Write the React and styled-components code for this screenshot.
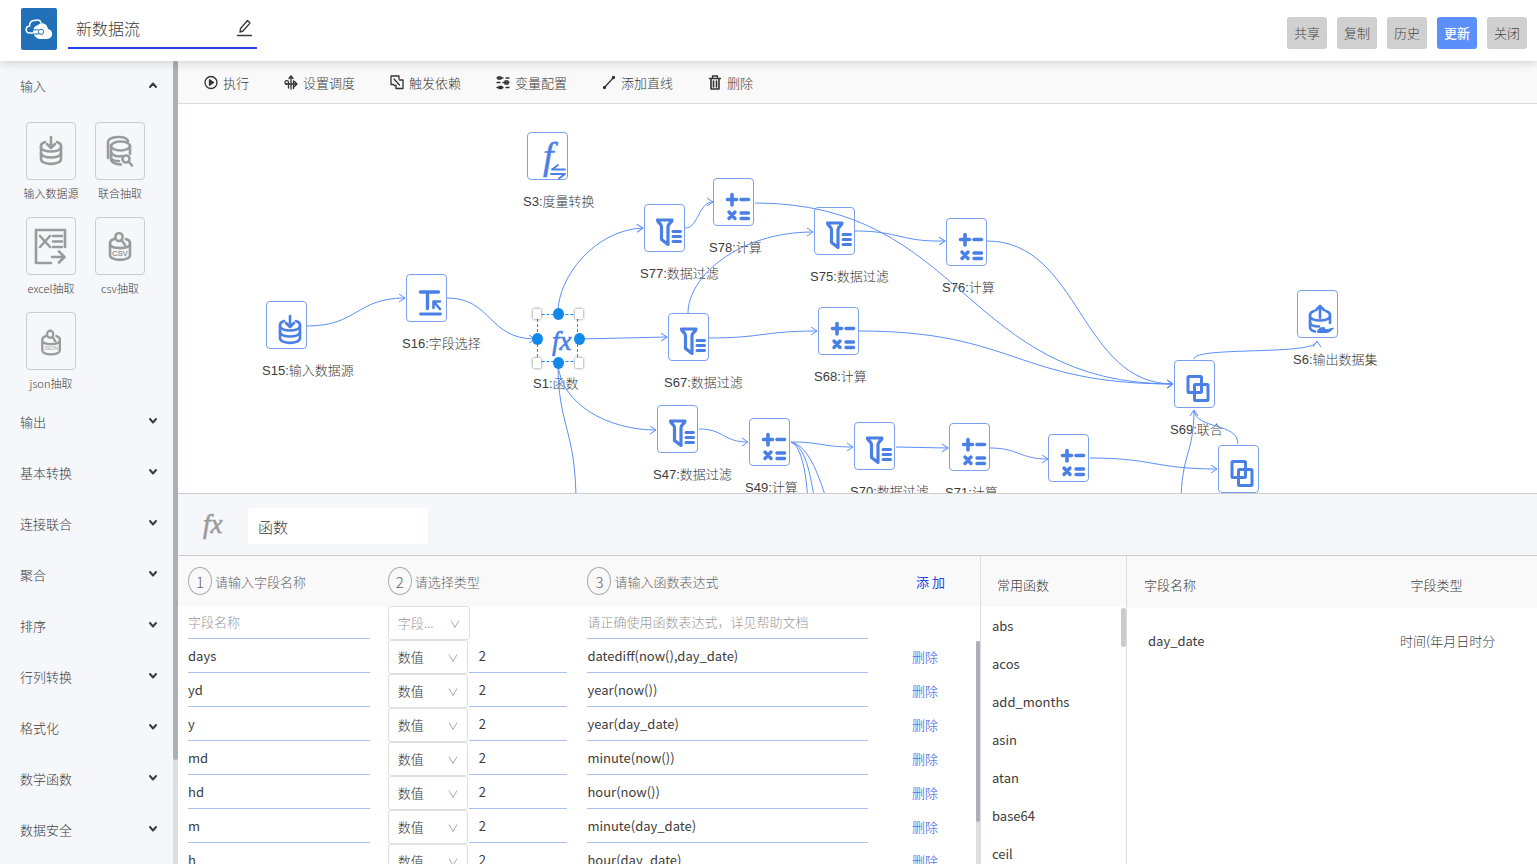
import React, { useState } from 'react';
import styled, { createGlobalStyle } from 'styled-components';

const BLUE = '#4a7fe5';
const GRAY = '#9b9b9b';

// 左侧菜单
const INPUT_ITEMS = [
  { id: 'source', icon: 'dbIn', label: '输入数据源' },
  { id: 'union', icon: 'dbSearch', label: '联合抽取' },
  { id: 'excel', icon: 'excel', label: 'excel抽取' },
  { id: 'csv', icon: 'csv', label: 'csv抽取' },
  { id: 'json', icon: 'json', label: 'json抽取' },
];

const GROUPS = ['输出', '基本转换', '连接联合', '聚合', '排序', '行列转换', '格式化', '数学函数', '数据安全'];

const TOOLS = [
  { icon: 'run', label: '执行' },
  { icon: 'schedule', label: '设置调度' },
  { icon: 'depend', label: '触发依赖' },
  { icon: 'config', label: '变量配置' },
  { icon: 'line', label: '添加直线' },
  { icon: 'trash', label: '删除' },
];

const ACTIONS = ['共享', '复制', '历史', '更新', '关闭'];

// 画布节点
const NODES = [
  { id: 'S3', x: 349, y: 28, icon: 'measure', label: '度量转换' },
  { id: 'S15', x: 88, y: 197, icon: 'dbIn', label: '输入数据源' },
  { id: 'S16', x: 228, y: 170, icon: 'textSelect', label: '字段选择' },
  { id: 'S77', x: 466, y: 100, icon: 'filter', label: '数据过滤' },
  { id: 'S78', x: 535, y: 74, icon: 'calc', label: '计算' },
  { id: 'S75', x: 636, y: 103, icon: 'filter', label: '数据过滤' },
  { id: 'S76', x: 768, y: 114, icon: 'calc', label: '计算' },
  { id: 'S1', x: 359, y: 210, icon: 'fx', label: '函数', active: true },
  { id: 'S67', x: 490, y: 209, icon: 'filter', label: '数据过滤' },
  { id: 'S68', x: 640, y: 203, icon: 'calc', label: '计算' },
  { id: 'S47', x: 479, y: 301, icon: 'filter', label: '数据过滤' },
  { id: 'S49', x: 571, y: 314, icon: 'calc', label: '计算' },
  { id: 'S70', x: 676, y: 318, icon: 'filter', label: '数据过滤' },
  { id: 'S71', x: 771, y: 319, icon: 'calc', label: '计算' },
  { id: 'S72', x: 870, y: 330, icon: 'calc', label: '计算' },
  { id: 'S69', x: 996, y: 256, icon: 'union', label: '联合' },
  { id: 'S73', x: 1040, y: 341, icon: 'union', label: '联合' },
  { id: 'S6', x: 1119, y: 186, icon: 'dbOut', label: '输出数据集' },
];

const EDGES = [
  'M129 222C180 222 178 194 227 194',
  'M269 194C314 194 310 235 357 235',
  'M380 208C380 174 416 126 465 124',
  'M507 124C521 124 520 98 535 98',
  'M577 99C786 99 786 280 995 280',
  'M510 209C510 173 560 128 635 128',
  'M677 127C722 127 722 138 767 137',
  'M809 137C902 137 902 280 995 280',
  'M401 235L489 233',
  'M531 234C585 234 585 227 639 227',
  'M681 227C838 227 838 280 995 280',
  'M380 259C382 300 430 326 478 326',
  'M521 325C546 325 545 338 570 338',
  'M613 338C644 338 644 343 675 343',
  'M718 343L770 344',
  'M812 344C841 344 841 355 870 355',
  'M912 354C976 354 976 365 1039 365',
  'M1016 255C1016 242 1139 252 1139 237',
  'M1003 400C1003 350 1016 350 1016 306',
];

const OPEN_EDGES = [
  'M380 259C380 324 398 324 398 400',
  'M613 338C626 344 629 380 630 400',
  'M613 338C629 342 634 380 637 400',
  'M613 338C632 342 642 376 650 400',
  'M1060 340C1060 318 1018 326 1016 306',
];

const ROWS = [
  { name: 'days', expr: 'datediff(now(),day_date)' },
  { name: 'yd', expr: 'year(now())' },
  { name: 'y', expr: 'year(day_date)' },
  { name: 'md', expr: 'minute(now())' },
  { name: 'hd', expr: 'hour(now())' },
  { name: 'm', expr: 'minute(day_date)' },
  { name: 'h', expr: 'hour(day_date)' },
];

const FUNCS = ['abs', 'acos', 'add_months', 'asin', 'atan', 'base64', 'ceil'];

const SHAPES = {
  dbIn: (
    <>
      <path d="M12 1V11M8 8L12 12L16 8" />
      <path d="M6 6C3 7 2 8.500 2 10V23C2 29.500 22 29.500 22 23V10C22 8.500 21 7 18 6" />
      <path d="M2 11C2 17 22 17 22 11M2 17C2 23 22 23 22 17" />
    </>
  ),
  dbOut: (
    <>
      <path d="M11 14V2M7 6L11 2L15 6" />
      <path d="M5 7C2 8 1 9.500 1 11V23C1 26 3 27 6 27.500M21 19V11C21 9.500 20 8 17 7" />
      <path d="M1 12C1 18 21 18 21 12M1 18C1 21 5 22.500 10 22.500" />
      <path d="M9 26C12 23 14 23 16 24L14 25.500H19L24.500 24C22 27 20 28.500 17 28.500H9Z" fill="currentColor" strokeWidth="1" />
    </>
  ),
  dbSearch: (
    <>
      <path d="M0 22V6C1 0 18 -1 20 5" />
      <ellipse cx="12.500" cy="10" rx="9.500" ry="4.500" />
      <path d="M3 10V23C3 26 7 28.500 13 28.500M22 10V18" />
      <path d="M3 16C4 19.500 9 21 14 20M3 22C4 24 7 25 11 25" />
      <circle cx="18" cy="23" r="3.500" />
      <path d="M20.500 25.500L24 29.500" />
    </>
  ),
  excel: (
    <>
      <path d="M26 16V-1H-3V32H12" />
      <path d="M1 5L11 16M11 5L1 16" />
      <path d="M14 5H23M14 10.500H23M14 16H23" />
      <path d="M13 26H25M20 20.500L25.500 26L20 31.500" />
    </>
  ),
  csv: (
    <>
      <ellipse cx="11" cy="6" rx="3.600" ry="4" />
      <path d="M13.500 9L17 14" />
      <path d="M6 8C3 9 2 10.500 2 12V24C2 30.500 22 30.500 22 24V12C22 10.500 21 9 18 8M2 13C3 18.500 21 18.500 22 13" />
      <text x="12" y="25" textAnchor="middle" fontSize="7.500" fontFamily="Liberation Sans, sans-serif" fill="currentColor" strokeWidth="0.300">
        CSV
      </text>
    </>
  ),
  json: (
    <g transform="translate(1.500 3) scale(0.880)">
      <ellipse cx="11" cy="6" rx="3.600" ry="4" />
      <path d="M13.500 9L17 14" />
      <path d="M6 8C3 9 2 10.500 2 12V24C2 30.500 22 30.500 22 24V12C22 10.500 21 9 18 8M2 13C3 18.500 21 18.500 22 13" />
      <text x="12" y="24" textAnchor="middle" fontSize="6" fontFamily="Liberation Sans, sans-serif" fill="currentColor" stroke="none">
        JSON
      </text>
    </g>
  ),
  textSelect: (
    <>
      <path d="M2.500 4H20.500M9.500 4V20.500" strokeWidth="3.400" />
      <path d="M2.500 26H22.500" strokeWidth="2.800" />
      <path d="M15.500 20V13.500H22M16 14L22 21" strokeWidth="2.600" />
    </>
  ),
  fx: (
    <text x="3" y="22" fontSize="27" fontStyle="italic" fontFamily="Liberation Serif, serif" fill="currentColor" strokeWidth="0.600">
      fx
    </text>
  ),
  measure: (
    <>
      <text x="4" y="23" fontSize="38" fontStyle="italic" fontFamily="Liberation Serif, serif" fill="currentColor" strokeWidth="0.500">
        f
      </text>
      <path d="M26 23.500H13L19 19M12 28H26L20 32.500" strokeWidth="1.800" />
    </>
  ),
  filter: (
    <>
      <path d="M1.500 2H16C16.500 4 12 5.500 12 8.500V26.500L5.500 21.500V8.500C5.500 5.500 1 4 1.500 2Z" strokeWidth="3.200" />
      <path d="M17 13.500H24.500M17 18.500H24.500M17 23.500H24.500" strokeWidth="3" />
    </>
  ),
  calc: (
    <>
      <path d="M2.500 7.500H11.500M7 2.500V13M16 7.500H23.500" strokeWidth="3.600" />
      <path d="M4 20L10 26.500M10 20L4 26.500M16 21H23.500M16 26.500H23.500" strokeWidth="3.400" />
    </>
  ),
  union: (
    <>
      <rect x="2" y="2.500" width="13.500" height="16" rx="1" strokeWidth="3" />
      <rect x="8.500" y="10.500" width="13.500" height="16" rx="1" strokeWidth="3" />
    </>
  ),
};

const TOOL_SHAPES = {
  run: (
    <>
      <circle cx="7" cy="7.500" r="6" />
      <path d="M5.500 4.800L9.500 7.500L5.500 10.200Z" fill="currentColor" />
    </>
  ),
  schedule: (
    <>
      <path d="M7 1V14M5 3.500L7 1L9 3.500M2 9H12.500M10.500 6.500L13 9L10.500 11.500" />
      <path d="M4.500 13V7.500C4.500 5 1 5 1 7.500C1 9 2 9.500 3 9M9.500 13.500V6" />
    </>
  ),
  depend: (
    <>
      <path d="M9 4V1H1V9.500H3.500L5 11" />
      <path d="M9.500 5H13V13.500H6V10M4 4L9.500 10" />
    </>
  ),
  config: (
    <>
      <path d="M1 3H7M10 3H13M1 7.500H4M7 7.500H13M1 12.500H7M10 12.500H13" />
      <rect x="2" y="2" width="3" height="2" />
      <rect x="9" y="6" width="3" height="3" />
      <rect x="3" y="11.500" width="3" height="2" />
    </>
  ),
  line: (
    <>
      <path d="M2.500 12.500L11 3" />
      <circle cx="2.500" cy="12.500" r="1" fill="currentColor" />
      <circle cx="11.500" cy="2.500" r="1" fill="currentColor" />
    </>
  ),
  trash: (
    <>
      <path d="M1.500 3.500H12.500M4.500 3V1H9.500V3" />
      <path d="M3 4V14H11V4M5.500 6V12M8.500 6V12" strokeWidth="1.600" />
    </>
  ),
};

const NodeIcon = ({ name }) => (
  <Glyph width="24" height="30" viewBox="0 0 24 30" strokeWidth="2.600">
    {SHAPES[name]}
  </Glyph>
);

const Chevron = ({ up }) => (
  <Glyph width="10" height="10" viewBox="0 0 10 10" strokeWidth="2">
    <path d={up ? 'M2 7L5 3.500L8 7' : 'M2 3L5 6.500L8 3'} />
  </Glyph>
);

const Select = ({ label, value, options, muted }) => (
  <SelectBox $muted={muted}>
    <select aria-label={label} defaultValue={value}>
      {options.map((option) => (
        <option key={option}>{option}</option>
      ))}
    </select>
    <svg width="10" height="10" viewBox="0 0 10 10" fill="none" stroke="#aaa">
      <path d="M1 1.500L5 8.500L9 1.500" />
    </svg>
  </SelectBox>
);

const App = () => {
  const [title, setTitle] = useState('新数据流');
  const [stepName, setStepName] = useState('函数');
  const [opened, setOpened] = useState(true);

  return (
    <>
      <GlobalStyle />
      <Page>
        <Header>
          <Logo width="36" height="42" viewBox="0 0 36 42">
            <rect width="36" height="42" rx="2" fill="#2170b8" />
            <path
              d="M12 25C14 29 16 31 20 31H26C32.500 31 33 22 27 21C26 15.500 20.500 13.500 17 17C15 17.500 13 19 12.500 21Z"
              fill="#fff"
            />
            <path
              d="M12.500 25H9C4 25 4 18.500 8.500 18C8.500 13.500 11.500 12 14 12.500C17 11 19.500 12.500 20 15"
              fill="none"
              stroke="#fff"
              strokeWidth="1.500"
            />
            <path d="M11 21.800H17.500" stroke="#2170b8" />
            <path d="M12 26H18" stroke="#2170b8" />
            <circle cx="20" cy="23.800" r="2.600" fill="#fff" stroke="#2170b8" />
          </Logo>
          <TitleBox>
            <input aria-label="数据流名称" value={title} onChange={(e) => setTitle(e.target.value)} />
            <Glyph width="15" height="18" viewBox="0 0 15 18" strokeWidth="1.400">
              <path d="M3 13L3.500 9.500L10.500 1.500L13 4L6 12Z M0.500 16.500H14.500" />
            </Glyph>
          </TitleBox>
          <Actions>
            {ACTIONS.map((action) => (
              <ActionButton key={action} type="button" $primary={action === '更新'}>
                {action}
              </ActionButton>
            ))}
          </Actions>
        </Header>

        <Body>
          <Sidebar>
            <Menu>
              <GroupButton type="button" aria-expanded={opened} onClick={() => setOpened(!opened)}>
                输入
                <Chevron up={opened} />
              </GroupButton>
              {opened && (
                <Tiles>
                  {INPUT_ITEMS.map((item) => (
                    <Tile key={item.id}>
                      <TileIcon>
                        <NodeIcon name={item.icon} />
                      </TileIcon>
                      <span>{item.label}</span>
                    </Tile>
                  ))}
                </Tiles>
              )}
              {GROUPS.map((group) => (
                <GroupButton key={group} type="button" aria-expanded="false">
                  {group}
                  <Chevron />
                </GroupButton>
              ))}
            </Menu>
            <SideRail>
              <Thumb $size="87%" />
            </SideRail>
          </Sidebar>

          <Work>
            <Toolbar>
              {TOOLS.map((tool) => (
                <ToolButton key={tool.icon} type="button">
                  <Glyph width="14" height="15" viewBox="0 0 14 15" strokeWidth="1.300">
                    {TOOL_SHAPES[tool.icon]}
                  </Glyph>
                  {tool.label}
                </ToolButton>
              ))}
            </Toolbar>

            <Canvas>
              {NODES.map((node) => (
                <Node key={node.id} $x={node.x} $y={node.y}>
                  <NodeBox $active={node.active}>
                    <NodeIcon name={node.icon} />
                  </NodeBox>
                  <NodeLabel>
                    {node.id}:{node.label}
                  </NodeLabel>
                </Node>
              ))}
              <Edges>
                <defs>
                  <marker id="arrow" markerUnits="userSpaceOnUse" markerWidth="10" markerHeight="12" refX="7" refY="5" orient="auto">
                    <path d="M1 1L7 5L1 9" fill="none" stroke="#5b8ff9" />
                  </marker>
                </defs>
                {EDGES.map((d) => (
                  <path key={d} d={d} markerEnd="url(#arrow)" />
                ))}
                {OPEN_EDGES.map((d) => (
                  <path key={d} d={d} />
                ))}
              </Edges>
              <Handle $x={359} $y={210} />
              <Handle $x={401} $y={210} />
              <Handle $x={359} $y={259} />
              <Handle $x={401} $y={259} />
              <Port $x={380} $y={210} />
              <Port $x={359} $y={235} />
              <Port $x={401} $y={235} />
              <Port $x={380} $y={259} />
            </Canvas>

            <Dock>
              <DockHeader>
                <NodeIcon name="fx" />
                <input aria-label="步骤名称" value={stepName} onChange={(e) => setStepName(e.target.value)} />
              </DockHeader>
              <Panels>
                <Editor>
                  <EditorTable>
                    <thead>
                      <HeadRow>
                        <th>
                          <Step>1</Step>请输入字段名称
                        </th>
                        <th>
                          <Step>2</Step>请选择类型
                        </th>
                        <th>
                          <Step>3</Step>请输入函数表达式
                        </th>
                        <th>
                          <AddButton type="button">添 加</AddButton>
                        </th>
                      </HeadRow>
                    </thead>
                    <tbody>
                      <Row>
                        <td>
                          <LineInput aria-label="字段名称" placeholder="字段名称" />
                        </td>
                        <td>
                          <Select label="字段类型" value="字段..." options={['字段...', '数值']} muted />
                        </td>
                        <td>
                          <LineInput aria-label="函数表达式" placeholder="请正确使用函数表达式，详见帮助文档" />
                        </td>
                        <td />
                      </Row>
                      {ROWS.map((row) => (
                        <Row key={row.name}>
                          <td>
                            <LineInput aria-label="字段名称" defaultValue={row.name} />
                          </td>
                          <td>
                            <Select label="字段类型" value="数值" options={['数值', '字符']} />
                            <LineInput aria-label="小数位" defaultValue="2" $indent />
                          </td>
                          <td>
                            <LineInput aria-label="函数表达式" defaultValue={row.expr} />
                          </td>
                          <td>
                            <LinkButton type="button">删除</LinkButton>
                          </td>
                        </Row>
                      ))}
                    </tbody>
                  </EditorTable>
                  <EditorRail>
                    <Thumb $size="81%" />
                  </EditorRail>
                </Editor>

                <FuncPanel>
                  <h2>常用函数</h2>
                  <ul>
                    {FUNCS.map((func) => (
                      <li key={func}>{func}</li>
                    ))}
                  </ul>
                  <FuncThumb />
                </FuncPanel>

                <FieldPanel>
                  <FieldTable>
                    <thead>
                      <tr>
                        <th>字段名称</th>
                        <th>字段类型</th>
                      </tr>
                    </thead>
                    <tbody>
                      <tr>
                        <td>day_date</td>
                        <td>时间(年月日时分</td>
                      </tr>
                    </tbody>
                  </FieldTable>
                </FieldPanel>
              </Panels>
            </Dock>
          </Work>
        </Body>
      </Page>
    </>
  );
};

const GlobalStyle = createGlobalStyle`
  * {
    box-sizing: border-box;
  }
  body {
    margin: 0;
    color: #3c3c3c;
    background: #fff;
    font-family: 'Noto Sans CJK SC', sans-serif;
    font-size: 13px;
    font-weight: 300;
  }
  button, input, select {
    padding: 0;
    border: none;
    outline: none;
    background: none;
    color: inherit;
    font: inherit;
  }
  button {
    cursor: pointer;
  }
`;

const Glyph = styled.svg`
  flex: none;
  overflow: visible;
  fill: none;
  stroke: currentColor;
  stroke-linecap: round;
  stroke-linejoin: round;
`;

const Page = styled.div`
  height: 100vh;
  display: flex;
  flex-direction: column;
  overflow: hidden;
`;

const Header = styled.header`
  position: relative;
  z-index: 2;
  height: 61px;
  flex: none;
  display: flex;
  align-items: flex-start;
  padding: 8px 10px 0 21px;
  background: #fff;
  box-shadow: 0 1px 10px rgba(0, 0, 0, 0.18);
`;

const Logo = styled.svg`
  flex: none;
`;

const TitleBox = styled.div`
  width: 189px;
  height: 41px;
  margin-left: 11px;
  padding: 0 5px 0 8px;
  display: flex;
  align-items: center;
  border-bottom: 2px solid #2343e6;
  input {
    flex: 1;
    min-width: 0;
    height: 38px;
    font-size: 16px;
  }
`;

const Actions = styled.div`
  display: flex;
  gap: 10px;
  margin: 9px 0 0 auto;
`;

const ActionButton = styled.button`
  width: 40px;
  height: 32px;
  border-radius: 3px;
  padding-bottom: 2px;
  background: ${({ $primary }) => ($primary ? '#5b8ff9' : '#d0d0d0')};
  color: ${({ $primary }) => ($primary ? '#fff' : '#444')};
  font-weight: ${({ $primary }) => ($primary ? 500 : 300)};
`;

const Body = styled.div`
  flex: 1;
  min-height: 0;
  display: flex;
`;

const Sidebar = styled.aside`
  width: 178px;
  flex: none;
  display: flex;
  background: #f5f7fb;
`;

const Menu = styled.nav`
  flex: 1;
  overflow: hidden;
`;

const GroupButton = styled.button`
  width: 100%;
  height: 51px;
  display: flex;
  align-items: center;
  justify-content: space-between;
  padding: 0 15px 3px 20px;
`;

const Tiles = styled.div`
  display: grid;
  grid-template-columns: 68px 68px;
  gap: 10px 1px;
  padding: 10px 0 0 17px;
`;

const Tile = styled.div`
  display: flex;
  flex-direction: column;
  align-items: center;
  font-size: 11px;
  line-height: 27px;
  white-space: nowrap;
`;

const TileIcon = styled.div`
  width: 50px;
  height: 58px;
  display: flex;
  align-items: center;
  justify-content: center;
  border: 1px solid #ccc;
  border-radius: 4px;
  color: ${GRAY};
`;

const SideRail = styled.div`
  width: 5px;
  background: #dcdee2;
`;

const Thumb = styled.div`
  width: 100%;
  height: ${({ $size }) => $size};
  border-radius: 3px;
  background: #acafb5;
`;

const Work = styled.main`
  flex: 1;
  min-width: 0;
  display: flex;
  flex-direction: column;
`;

const Toolbar = styled.div`
  height: 43px;
  flex: none;
  display: flex;
  align-items: center;
  gap: 35px;
  padding: 0 26px;
  border-bottom: 1px solid #ddd;
  background: #f9f9f9;
`;

const ToolButton = styled.button`
  display: flex;
  align-items: center;
  gap: 5px;
  svg {
    color: #333;
  }
`;

const Canvas = styled.section`
  position: relative;
  flex: 1;
  min-height: 0;
  overflow: hidden;
  background: #fff;
`;

const Edges = styled.svg`
  position: absolute;
  inset: 0;
  width: 100%;
  height: 100%;
  fill: none;
  stroke: #5b8ff9;
  pointer-events: none;
`;

const Node = styled.div`
  position: absolute;
  left: ${({ $x }) => $x}px;
  top: ${({ $y }) => $y}px;
  width: 41px;
`;

const NodeBox = styled.div`
  height: 48px;
  padding: 13px 0 0 11px;
  border: 1px ${({ $active }) => ($active ? 'dashed #1890ff' : 'solid #7ba0f0')};
  border-radius: ${({ $active }) => ($active ? 0 : 4)}px;
  background: #fff;
  color: ${BLUE};
`;

const NodeLabel = styled.div`
  margin: 12px 0 0 -4px;
  line-height: 20px;
  white-space: nowrap;
  font-family: 'Liberation Sans', 'Noto Sans CJK SC', sans-serif;
`;

const Handle = styled.i`
  position: absolute;
  left: ${({ $x }) => $x - 4}px;
  top: ${({ $y }) => $y - 5}px;
  width: 8px;
  height: 10px;
  border-radius: 1px;
  background: #fff;
  box-shadow: 0 0 3px rgba(0, 0, 0, 0.6);
`;

const Port = styled.i`
  position: absolute;
  left: ${({ $x }) => $x - 5}px;
  top: ${({ $y }) => $y - 6}px;
  width: 11px;
  height: 12px;
  border-radius: 50%;
  background: #1089e9;
`;

const Dock = styled.section`
  height: 371px;
  flex: none;
  display: flex;
  flex-direction: column;
  border-top: 1px solid #ccc;
`;

const DockHeader = styled.div`
  height: 62px;
  flex: none;
  display: flex;
  align-items: center;
  gap: 24px;
  padding: 3px 22px 0;
  border-bottom: 1px solid #ccc;
  background: #f5f7fb;
  color: ${GRAY};
  input {
    width: 180px;
    height: 36px;
    padding: 0 10px;
    background: #fff;
    color: #3c3c3c;
    font-size: 15px;
  }
`;

const Panels = styled.div`
  flex: 1;
  min-height: 0;
  display: grid;
  grid-template-columns: minmax(0, 1fr) 146px 410px;
  grid-template-rows: minmax(0, 1fr);
`;

const Editor = styled.div`
  position: relative;
  overflow: hidden;
  border-right: 1px solid #ddd;
`;

const EditorTable = styled.table`
  display: block;
  thead,
  tbody {
    display: block;
  }
`;

const Row = styled.tr`
  display: grid;
  grid-template-columns: minmax(0, 8fr) minmax(0, 8fr) minmax(0, 13fr) 68px;
  height: 34px;
  padding-left: 10px;
  td {
    display: flex;
    padding: 0;
  }
  td:nth-child(1) {
    padding-right: 18px;
  }
  td:nth-child(2) {
    padding-right: 20px;
  }
  td:nth-child(3) {
    padding-right: 44px;
  }
`;

const HeadRow = styled(Row)`
  height: 50px;
  background: #f9f9f9;
  color: #666;
  th {
    display: flex;
    align-items: center;
    gap: 3px;
    padding: 0;
    font-weight: 300;
  }
`;

const Step = styled.span`
  width: 24px;
  height: 28px;
  display: flex;
  align-items: center;
  justify-content: center;
  border: 1px solid #aaa;
  border-radius: 50%;
  font-size: 15px;
`;

const AddButton = styled.button`
  padding-left: 4px;
  color: #2343e6;
  font-weight: 400;
`;

const LinkButton = styled.button`
  padding-bottom: 2px;
  color: #2f4fe0;
`;

const LineInput = styled.input`
  flex: 1;
  min-width: 0;
  height: 33px;
  padding-bottom: 2px;
  padding-left: ${({ $indent }) => ($indent ? 10 : 0)}px;
  border-bottom: 1px solid #a9c0f5;
  font-size: 13px;
  font-weight: 400;
  &::placeholder {
    color: #999;
    font-weight: 300;
  }
`;

const SelectBox = styled.div`
  position: relative;
  width: ${({ $muted }) => ($muted ? 82 : 80)}px;
  height: 34px;
  flex: none;
  margin-right: 1px;
  color: ${({ $muted }) => ($muted ? '#999' : '#333')};
  select {
    width: 100%;
    height: 100%;
    padding: 0 0 2px 9px;
    border: 1px solid #e0e0e0;
    border-radius: 3px;
    appearance: none;
  }
  svg {
    position: absolute;
    right: 10px;
    top: 13px;
    pointer-events: none;
  }
`;

const EditorRail = styled.div`
  position: absolute;
  top: 85px;
  right: 0;
  bottom: 0;
  width: 4px;
  background: #dcdee2;
`;

const FuncPanel = styled.div`
  position: relative;
  overflow: hidden;
  border-right: 1px solid #ddd;
  h2 {
    height: 51px;
    margin: 0;
    padding: 3px 16px 0;
    background: #f9f9f9;
    font-size: 13px;
    font-weight: 300;
    line-height: 51px;
  }
  ul {
    margin: 0;
    padding: 0;
    list-style: none;
  }
  li {
    padding-left: 11px;
    font-weight: 400;
    line-height: 38px;
  }
`;

const FuncThumb = styled.div`
  position: absolute;
  top: 52px;
  right: 0;
  width: 5px;
  height: 39px;
  border-radius: 3px;
  background: #c8cbd0;
`;

const FieldPanel = styled.div`
  overflow: hidden;
`;

const FieldTable = styled.table`
  width: 100%;
  border-collapse: collapse;
  table-layout: fixed;
  th,
  td {
    padding: 0;
    font-weight: 300;
  }
  th {
    height: 52px;
    padding-top: 4px;
    background: #f9f9f9;
  }
  td {
    height: 66px;
    padding-bottom: 2px;
  }
  th:first-child {
    width: 52%;
    padding-left: 17px;
    text-align: left;
  }
  th:last-child {
    padding-right: 4px;
  }
  td:first-child {
    padding-left: 21px;
    font-weight: 400;
  }
  td:last-child {
    padding-left: 18px;
    text-align: center;
  }
`;

export default App;
